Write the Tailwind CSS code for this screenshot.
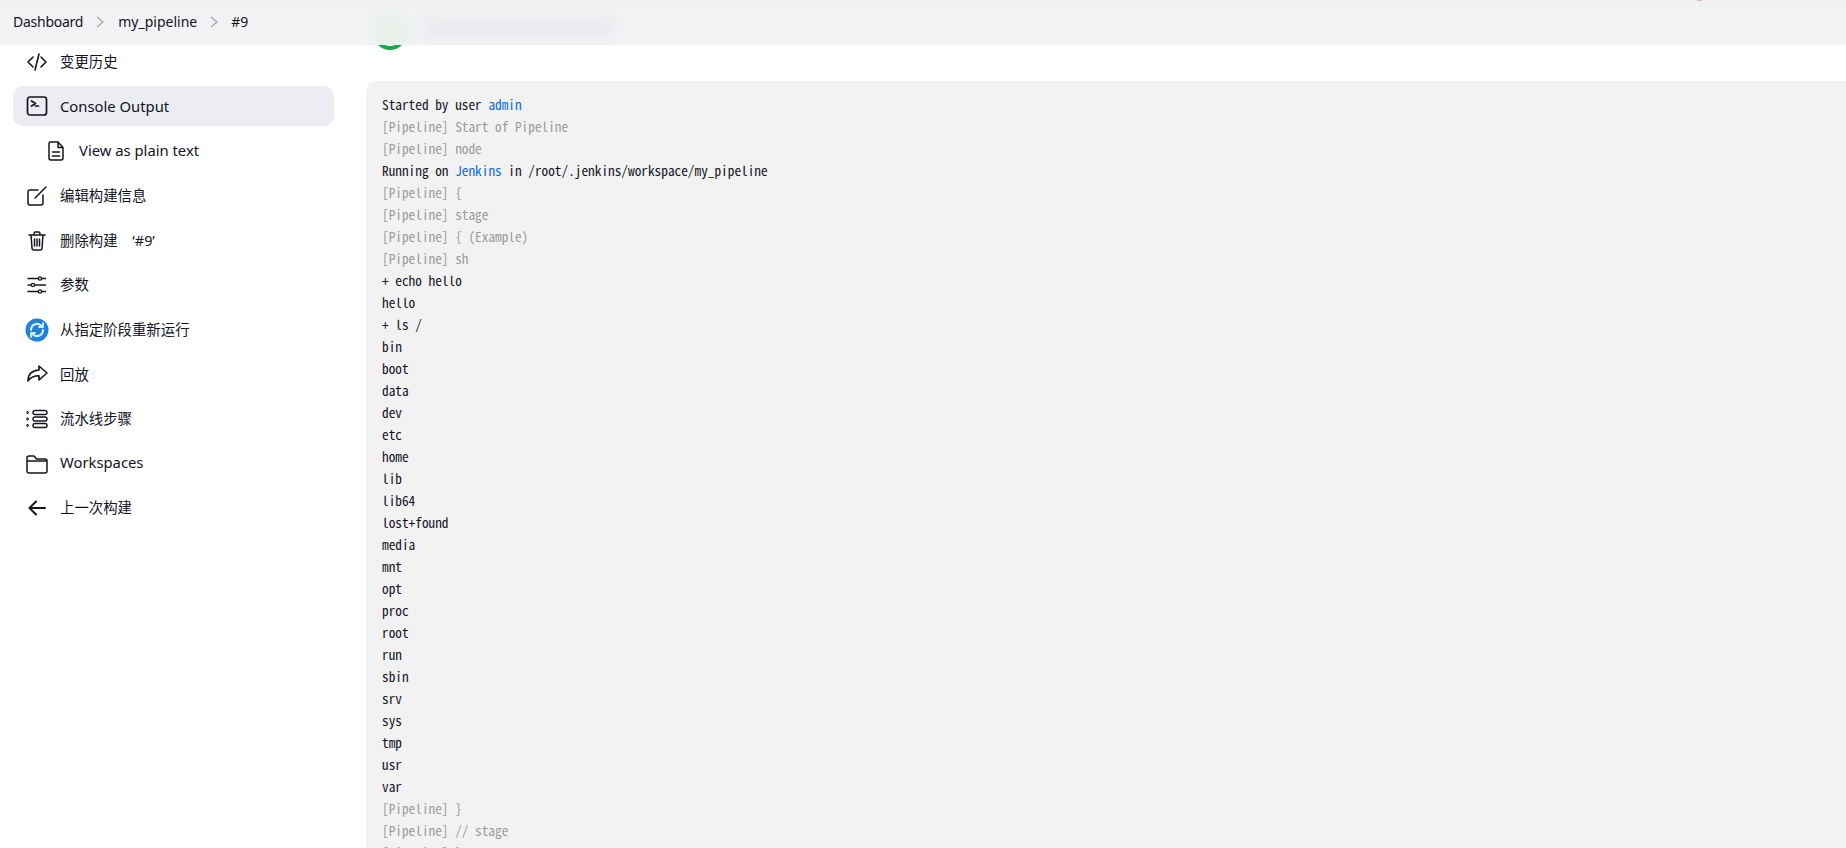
<!DOCTYPE html>
<html lang="en">
  <head>
    <meta charset="UTF-8" />
    <title>my_pipeline #9 Console</title>
    <script src="https://cdn.jsdelivr.net/npm/@tailwindcss/browser@4"></script>
  </head>
  <body class="relative h-[848px] overflow-hidden bg-white font-['Noto_Sans','Noto_Sans_CJK_SC',sans-serif] text-[#14141f]">
    <!-- Sticky breadcrumb bar, the page title is blurred away underneath -->
    <header class="absolute inset-x-0 top-0 z-10 flex h-[45px] items-center overflow-hidden bg-linear-to-b from-[#f1f1f4] to-[#f4f4f7] pb-[2px] pl-[13px] text-[14px]">
      <span class="absolute left-[374px] top-[14px] h-[40px] w-[32px] rounded-full bg-[#e4f0e8] blur-[8px]"></span>
      <span class="absolute left-[425px] top-[22px] h-[14px] w-[190px] rounded-full bg-[#e6e6ea] blur-[8px]"></span>
      <a class="relative tracking-[-0.25px]" href="#">Dashboard</a>
      <svg class="relative ml-[11px] mr-[12px] h-3 w-3 text-[#a0a0a8]" viewBox="0 0 12 12" fill="none" stroke="currentColor" stroke-width="1.2"><path d="M3 1l6 5-6 5" /></svg>
      <a class="relative" href="#">my_pipeline</a>
      <svg class="relative mx-[11px] h-3 w-3 text-[#a0a0a8]" viewBox="0 0 12 12" fill="none" stroke="currentColor" stroke-width="1.2"><path d="M3 1l6 5-6 5" /></svg>
      <a class="relative" href="#">#9</a>
      <span class="absolute left-[1697px] top-0 h-px w-[5px] bg-[#d8b8b0]"></span>
    </header>

    <div class="flex">
      <!-- Side panel -->
      <aside class="flex w-[366px] shrink-0 flex-col pl-[13px] pr-[32px] pt-[40px] text-[14.4px]">
        <a class="flex h-[44.6px] shrink-0 items-center gap-[11px] pl-[12px]" href="#">
          <svg class="h-6 w-6" viewBox="0 0 24 24" fill="none" stroke="currentColor" stroke-width="1.6" stroke-linecap="round" stroke-linejoin="round"><path d="M8 7l-5 5 5 5M16 7l5 5-5 5M14 4l-4 16" /></svg>
          <span>变更历史</span>
        </a>
        <a class="mb-[3.2px] mt-[1.4px] flex h-[40px] shrink-0 items-center gap-[11px] rounded-[10px] bg-[#ecedf2] pl-[12px]" href="#">
          <svg class="h-6 w-6" viewBox="0 0 24 24" fill="none" stroke="currentColor" stroke-width="1.7" stroke-linecap="round" stroke-linejoin="round"><rect x="2.500" y="3" width="19" height="18" rx="2.500" /><path d="M6.500 7l4 2.500-4 2.500M10.500 12h3" /></svg>
          <span class="text-[14.8px]">Console Output</span>
        </a>
        <a class="flex h-[44.6px] shrink-0 items-center gap-[11px] pl-[31px]" href="#">
          <svg class="h-6 w-6" viewBox="0 0 24 24" fill="none" stroke="currentColor" stroke-width="1.5" stroke-linecap="round" stroke-linejoin="round"><path d="M6 3h8l5 5.500V19a2 2 0 01-2 2H7a2 2 0 01-2-2V5a2 2 0 011-2zM14 3v5.500h5M8.500 13h7M8.500 17h7" /></svg>
          <span class="pb-[3px] text-[14.8px]">View as plain text</span>
        </a>
        <a class="flex h-[44.6px] shrink-0 items-center gap-[11px] pl-[12px]" href="#">
          <svg class="h-6 w-6" viewBox="0 0 24 24" fill="none" stroke="currentColor" stroke-width="1.5" stroke-linecap="round" stroke-linejoin="round"><path d="M13 6H5a2 2 0 00-2 2v11a2 2 0 002 2h11a2 2 0 002-2v-8M10 14L21 3" /></svg>
          <span>编辑构建信息</span>
        </a>
        <a class="flex h-[44.6px] shrink-0 items-center gap-[11px] pl-[12px]" href="#">
          <svg class="h-6 w-6" viewBox="0 0 24 24" fill="none" stroke="currentColor" stroke-width="1.5" stroke-linecap="round" stroke-linejoin="round"><path d="M4 6h16M9 6V4.500A1.500 1.500 0 0110.500 3h3A1.500 1.500 0 0115 4.500V6M6 6l1 13a2 2 0 002 2h6a2 2 0 002-2l1-13M9.500 10v7M12 10v7M14.500 10v7" /></svg>
          <span>删除构建 <span class="ml-[11px]">‘#9’</span></span>
        </a>
        <a class="flex h-[44.6px] shrink-0 items-center gap-[11px] pl-[12px]" href="#">
          <svg class="h-6 w-6" viewBox="0 0 24 24" fill="none" stroke="currentColor" stroke-width="1.300" stroke-linecap="round"><path d="M3 5.500h17.500M3 12h17.500M3 18.500h17.500" /><circle cx="15" cy="5.500" r="1.600" fill="white" /><circle cx="8" cy="12" r="1.600" fill="white" /><circle cx="15" cy="18.500" r="1.600" fill="white" /></svg>
          <span>参数</span>
        </a>
        <a class="flex h-[44.6px] shrink-0 items-center gap-[11px] pl-[12px]" href="#">
          <svg class="h-6 w-6" viewBox="0 0 24 24" fill="none" stroke="#d6ebfa" stroke-width="2.200" stroke-linecap="round" stroke-linejoin="round"><circle cx="12" cy="12" r="11.500" fill="#1f82d8" stroke="none" /><path d="M6 12a6 6 0 0110-4.500l1.500 1.500M18 12a6 6 0 01-10 4.500L6.500 15" /><path d="M18 5v4h-4M6 19v-4h4" stroke-width="1.800" /></svg>
          <span>从指定阶段重新运行</span>
        </a>
        <a class="flex h-[44.6px] shrink-0 items-center gap-[11px] pl-[12px]" href="#">
          <svg class="h-6 w-6" viewBox="0 0 24 24" fill="none" stroke="currentColor" stroke-width="1.600" stroke-linecap="round" stroke-linejoin="round"><path d="M14 4l8 7-8 7v-4.200c-5 0-8.500 1.500-11 5.200 0-6 3.500-10.500 11-11z" /></svg>
          <span>回放</span>
        </a>
        <a class="flex h-[44.6px] shrink-0 items-center gap-[11px] pl-[12px]" href="#">
          <svg class="h-6 w-6" viewBox="0 0 24 24" fill="none" stroke="currentColor" stroke-width="1.400" stroke-linejoin="round"><rect x="8" y="3.500" width="14" height="4" rx="2" /><rect x="8" y="10" width="14" height="4" rx="2" /><rect x="8" y="16.500" width="14" height="4" rx="2" /><path d="M2 4.200l2 1.300-2 1.300zM2 10.700l2 1.300-2 1.300zM2 17.200l2 1.300-2 1.300z" stroke-width="1" /></svg>
          <span>流水线步骤</span>
        </a>
        <a class="flex h-[44.6px] shrink-0 items-center gap-[11px] pl-[12px]" href="#">
          <svg class="h-6 w-6" viewBox="0 0 24 24" fill="none" stroke="currentColor" stroke-width="1.500" stroke-linejoin="round"><path d="M2 6a2 2 0 012-2h5l2.500 3H20a2 2 0 012 2v10a2 2 0 01-2 2H4a2 2 0 01-2-2zM2 9h20" /></svg>
          <span class="pb-[3px] text-[14.8px]">Workspaces</span>
        </a>
        <a class="flex h-[44.6px] shrink-0 items-center gap-[11px] pl-[12px]" href="#">
          <svg class="h-6 w-6" viewBox="0 0 24 24" fill="none" stroke="currentColor" stroke-width="2" stroke-linecap="round" stroke-linejoin="round"><path d="M20 12H5M11 5.500L4.500 12l6.500 6.500" /></svg>
          <span>上一次构建</span>
        </a>
      </aside>

      <!-- Console column -->
      <main class="min-w-0 flex-1 overflow-hidden">
        <div class="flex h-[81px] items-start pl-[7px] pt-[16px]">
          <svg class="h-[34px] w-[34px] shrink-0" viewBox="0 0 34 34" fill="none" stroke="#1ea64b" stroke-width="4"><circle cx="17" cy="17" r="15" /></svg>
        </div>
        <pre class="w-[1700px] rounded-[10px] bg-[#f2f2f2] px-[16px] pt-[13px] font-['Noto_Sans_Mono_CJK_SC','DejaVu_Sans_Mono',monospace] text-[13.3px] leading-[22px] text-[#14141f]">Started by user <a class="text-[#0b6bd6]" href="#">admin</a>
<span class="text-[#9a9a9a]">[Pipeline] Start of Pipeline</span>
<span class="text-[#9a9a9a]">[Pipeline] node</span>
Running on <a class="text-[#0b6bd6]" href="#">Jenkins</a> in /root/.jenkins/workspace/my_pipeline
<span class="text-[#9a9a9a]">[Pipeline] {</span>
<span class="text-[#9a9a9a]">[Pipeline] stage</span>
<span class="text-[#9a9a9a]">[Pipeline] { (Example)</span>
<span class="text-[#9a9a9a]">[Pipeline] sh</span>
+ echo hello
hello
+ ls /
bin
boot
data
dev
etc
home
lib
lib64
lost+found
media
mnt
opt
proc
root
run
sbin
srv
sys
tmp
usr
var
<span class="text-[#9a9a9a]">[Pipeline] }</span>
<span class="text-[#9a9a9a]">[Pipeline] // stage</span>
<span class="text-[#9a9a9a]">[Pipeline] }</span></pre>
      </main>
    </div>
  </body>
</html>
